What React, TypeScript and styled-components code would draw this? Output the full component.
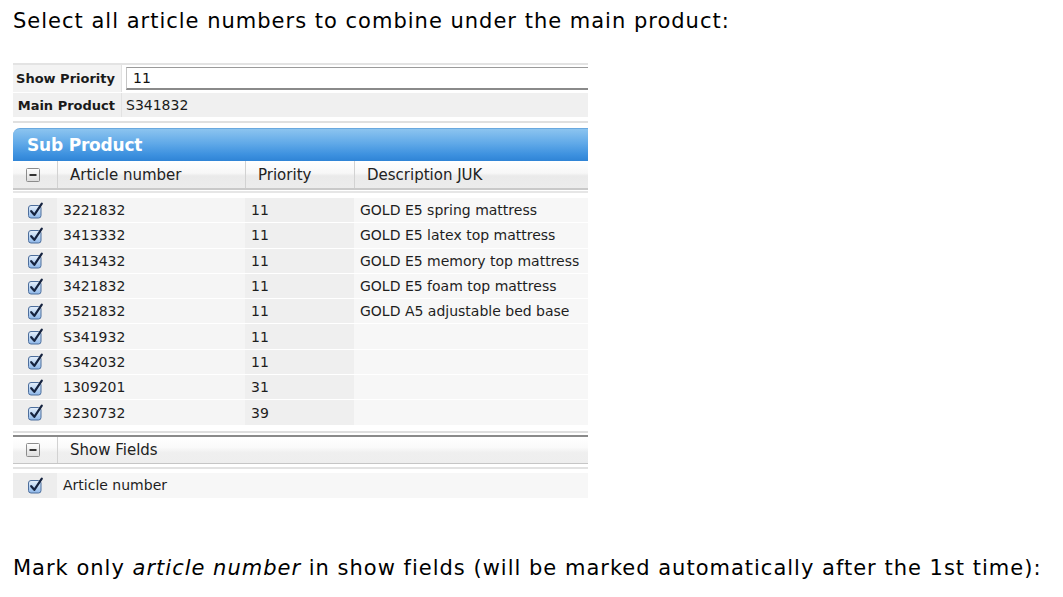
import React from 'react'
import styled, { createGlobalStyle } from 'styled-components'

const GlobalStyle = createGlobalStyle`
  body {
    margin: 0;
    background: #ffffff;
    font-family: "DejaVu Sans", Verdana, sans-serif;
  }
`

interface SubRow {
  article: string
  priority: string
  description?: string
}

const rows: SubRow[] = [
  { article: '3221832', priority: '11', description: 'GOLD E5 spring mattress' },
  { article: '3413332', priority: '11', description: 'GOLD E5 latex top mattress' },
  { article: '3413432', priority: '11', description: 'GOLD E5 memory top mattress' },
  { article: '3421832', priority: '11', description: 'GOLD E5 foam top mattress' },
  { article: '3521832', priority: '11', description: 'GOLD A5 adjustable bed base' },
  { article: 'S341932', priority: '11' },
  { article: 'S342032', priority: '11' },
  { article: '1309201', priority: '31' },
  { article: '3230732', priority: '39' },
]

const Checkbox = () => (
  <svg width='17' height='17' viewBox='0 0 17 17'>
    <defs>
      <linearGradient id='cbFill' x1='0' y1='0' x2='0' y2='1'>
        <stop offset='0' stopColor='#e6f0fb' />
        <stop offset='0.5' stopColor='#b9d4f3' />
        <stop offset='1' stopColor='#8db6e8' />
      </linearGradient>
    </defs>
    <rect x='1.5' y='3.5' width='12.5' height='12.5' rx='2.5' fill='url(#cbFill)' stroke='#4d6e9c' />
    <path d='M4.2 9.2 L7.3 12.8 L14.8 1.6' fill='none' stroke='#15233f' strokeWidth='2.2' strokeLinecap='round' strokeLinejoin='round' />
  </svg>
)

const Collapse = () => (
  <svg width='14' height='14' viewBox='0 0 14 14'>
    <defs>
      <linearGradient id='mnFill' x1='0' y1='0' x2='0' y2='1'>
        <stop offset='0' stopColor='#ffffff' />
        <stop offset='1' stopColor='#dcdcdc' />
      </linearGradient>
    </defs>
    <rect x='0.5' y='0.5' width='13' height='13' rx='1' fill='url(#mnFill)' stroke='#8c8c8c' />
    <rect x='3.5' y='6' width='7' height='2' fill='#333333' />
  </svg>
)

const App = () => {
  return (
    <Page>
      <GlobalStyle />
      <Caption>Select all article numbers to combine under the main product:</Caption>

      <Panel>
        {/* Main product form */}
        <FormBlock>
          <FormRow>
            <FormLabel>Show Priority</FormLabel>
            <InputCell>
              <PriorityInput>11</PriorityInput>
            </InputCell>
          </FormRow>
          <FormRow $shaded>
            <FormLabel>Main Product</FormLabel>
            <FormValue>S341832</FormValue>
          </FormRow>
        </FormBlock>

        {/* Sub products */}
        <SectionTitle>Sub Product</SectionTitle>
        <HeaderRow>
          <HeaderCell $center>
            <Collapse />
          </HeaderCell>
          <HeaderCell>Article number</HeaderCell>
          <HeaderCell>Priority</HeaderCell>
          <HeaderCell>Description JUK</HeaderCell>
        </HeaderRow>
        <HeaderRule />

        <Rows>
          {rows.map((row) => (
            <DataRow key={row.article}>
              <CheckCell>
                <Checkbox />
              </CheckCell>
              <DataCell>{row.article}</DataCell>
              <DataCell $dark>{row.priority}</DataCell>
              <DataCell $light>{row.description}</DataCell>
            </DataRow>
          ))}
        </Rows>

        {/* Show fields */}
        <FieldsBlock>
          <FieldsHeader>
            <HeaderCell $center>
              <Collapse />
            </HeaderCell>
            <HeaderCell>Show Fields</HeaderCell>
          </FieldsHeader>
          <FieldsRule />
          <FieldRow>
            <CheckCell>
              <Checkbox />
            </CheckCell>
            <DataCell $light>Article number</DataCell>
          </FieldRow>
        </FieldsBlock>
      </Panel>

      <Caption $bottom>
        Mark only <em>article number</em> in show fields (will be marked automatically after the 1st time):
      </Caption>
    </Page>
  )
}

export default App

const Page = styled.div`
  padding: 0 13px;
  width: 1050px;
`

const Caption = styled.p<{ $bottom?: boolean }>`
  margin: 0;
  padding-top: ${(p) => (p.$bottom ? '57px' : '8px')};
  font-family: "DejaVu Sans", Verdana, sans-serif;
  font-size: 21px;
  line-height: 26px;
  color: #000000;
  letter-spacing: 1px;
  white-space: nowrap;
`

const Panel = styled.div`
  width: 575px;
  margin-top: 29px;
  font-family: "DejaVu Sans", "Lucida Grande", sans-serif;
`

const FormBlock = styled.div`
  border-top: 2px solid #e3e3e3;
  border-bottom: 2px solid #e0e0e0;
  padding-bottom: 4px;
`

const FormRow = styled.div<{ $shaded?: boolean }>`
  display: grid;
  grid-template-columns: 109px 1fr;
  height: ${(p) => (p.$shaded ? '24px' : '27px')};
  background: ${(p) => (p.$shaded ? '#f0f0f0' : '#f3f3f3')};
  margin-top: ${(p) => (p.$shaded ? '1px' : '0')};
`

const FormLabel = styled.div`
  display: flex;
  align-items: center;
  justify-content: flex-end;
  padding-right: 6px;
  border-right: 1px solid #e2e2e2;
  font-size: 13px;
  font-weight: bold;
  color: #1a1a1a;
`

const InputCell = styled.div`
  display: flex;
  align-items: center;
  padding-left: 4px;
  background: #ffffff;
`

const PriorityInput = styled.div`
  flex: 1;
  height: 20px;
  display: flex;
  align-items: center;
  padding-left: 6px;
  background: #ffffff;
  border: 1px solid #c6c6c6;
  border-top-color: #9a9a9a;
  border-bottom: 2px solid #8a8a8a;
  border-right: none;
  font-size: 14px;
  color: #111111;
`

const FormValue = styled.div`
  display: flex;
  align-items: center;
  padding-left: 4px;
  font-size: 14px;
  color: #1a1a1a;
`

const SectionTitle = styled.div`
  margin-top: 5px;
  height: 33px;
  display: flex;
  align-items: center;
  padding-left: 14px;
  border-top-left-radius: 7px;
  border-top: 1px solid #6aa9df;
  box-sizing: border-box;
  background: linear-gradient(#8cc4ef, #60a9e8 45%, #3d91df 80%, #2f84d6);
  color: #ffffff;
  font-size: 17px;
  font-weight: bold;
  letter-spacing: -0.2px;
`

const HeaderRow = styled.div`
  display: grid;
  grid-template-columns: 44px 188px 109px 1fr;
  height: 27px;
  background: linear-gradient(#ffffff, #f7f7f7 45%, #eaeaea 55%, #ececec);
  border-bottom: 2px solid #c9c9c9;
`

const HeaderCell = styled.div<{ $center?: boolean }>`
  display: flex;
  align-items: center;
  justify-content: ${(p) => (p.$center ? 'center' : 'flex-start')};
  padding-left: ${(p) => (p.$center ? '0' : '12px')};
  border-left: 1px solid #d2d2d2;
  font-size: 15px;
  color: #222222;

  &:first-child {
    border-left: none;
    padding-right: 4px;
  }
`

const HeaderRule = styled.div`
  height: 2px;
  margin-top: 1px;
  background: #e6e6e6;
`

const Rows = styled.div`
  margin-top: 5px;
`

const DataRow = styled.div`
  display: grid;
  grid-template-columns: 44px 188px 109px 1fr;
  height: 24.3px;
  border-bottom: 1px solid #ffffff;
`

const CheckCell = styled.div`
  display: flex;
  align-items: center;
  justify-content: center;
  padding-left: 1px;
  background: #ededed;
`

const DataCell = styled.div<{ $dark?: boolean; $light?: boolean }>`
  display: flex;
  align-items: center;
  padding-left: 6px;
  background: ${(p) => (p.$dark ? '#efefef' : p.$light ? '#f7f7f7' : '#f5f5f5')};
  font-size: 14px;
  color: #1e1e1e;
  white-space: nowrap;
`

const FieldsBlock = styled.div`
  margin-top: 5px;
  border-top: 2px solid #dedede;
  padding-top: 2px;
`

const FieldsHeader = styled.div`
  display: grid;
  grid-template-columns: 44px 1fr;
  height: 26px;
  border-top: 2px solid #8a8a8a;
  border-bottom: 1px solid #c6c6c6;
  background: linear-gradient(#ffffff, #fafafa 40%, #efefef 60%, #eeeeee);
`

const FieldsRule = styled.div`
  height: 2px;
  margin-top: 3px;
  background: #e2e2e2;
`

const FieldRow = styled.div`
  display: grid;
  grid-template-columns: 44px 1fr;
  height: 25px;
  margin-top: 4px;
`
